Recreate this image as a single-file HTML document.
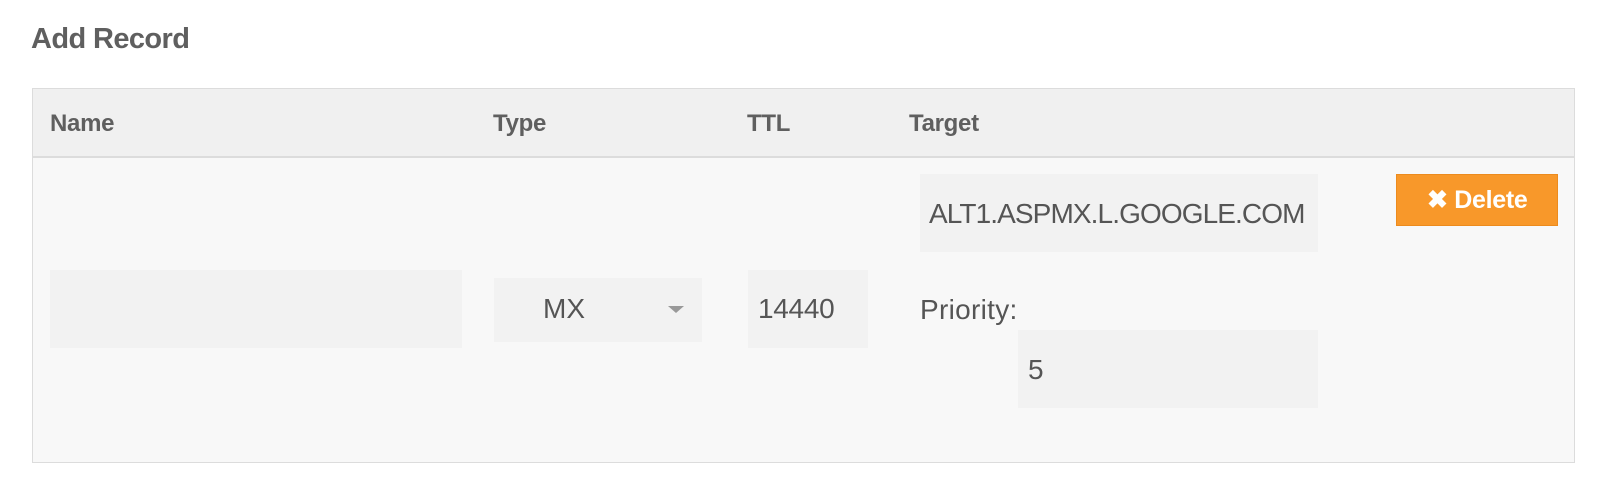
<!DOCTYPE html>
<html><head><style>
body{margin:0;width:1602px;height:486px;background:#fff;font-family:"Liberation Sans",sans-serif;color:#555;position:relative;overflow:hidden}
.a{position:absolute;line-height:1;white-space:nowrap}
.b{position:absolute}
.t{font-size:28px;color:#555}
.th{font-size:24px;font-weight:bold;color:#5f5f5f;top:112px;letter-spacing:-0.3px}
.in{position:absolute;background:#f2f2f2}
</style></head><body>
<div class="a" style="left:31px;top:25px;font-size:29px;font-weight:bold;color:#5f5f5f;letter-spacing:-0.6px">Add Record</div>
<div class="b" style="left:32px;top:88px;width:1541px;height:373px;border:1px solid #dcdcdc;background:#f8f8f8"></div>
<div class="b" style="left:33px;top:89px;width:1541px;height:67px;background:#f0f0f0;border-bottom:2px solid #dcdcdc"></div>
<div class="a th" style="left:50px">Name</div>
<div class="a th" style="left:493px">Type</div>
<div class="a th" style="left:747px">TTL</div>
<div class="a th" style="left:909px">Target</div>

<div class="in" style="left:50px;top:270px;width:412px;height:78px"></div>
<div class="in" style="left:494px;top:278px;width:208px;height:64px"></div>
<div class="a t" style="left:543px;top:295px">MX</div>
<div class="b" style="left:668px;top:306px;width:0;height:0;border-left:8px solid transparent;border-right:8px solid transparent;border-top:7px solid #999"></div>
<div class="in" style="left:748px;top:270px;width:120px;height:78px"></div>
<div class="a t" style="left:758px;top:295px;letter-spacing:-0.3px">14440</div>
<div class="in" style="left:920px;top:174px;width:398px;height:78px"></div>
<div class="a t" style="left:929px;top:200px;letter-spacing:-0.9px">ALT1.ASPMX.L.GOOGLE.COM</div>
<div class="a t" style="left:920px;top:296px;letter-spacing:0.3px">Priority:</div>
<div class="in" style="left:1018px;top:330px;width:300px;height:78px"></div>
<div class="a t" style="left:1028px;top:356px">5</div>
<div class="b" style="left:1396px;top:174px;width:162px;height:52px;background:#f8982a;border:1px solid #ec8b1e;box-sizing:border-box"></div>
<div class="a" style="left:1427px;top:188px;font-size:25px;font-weight:bold;color:#fff;letter-spacing:-0.3px">✖ Delete</div>
</body></html>
